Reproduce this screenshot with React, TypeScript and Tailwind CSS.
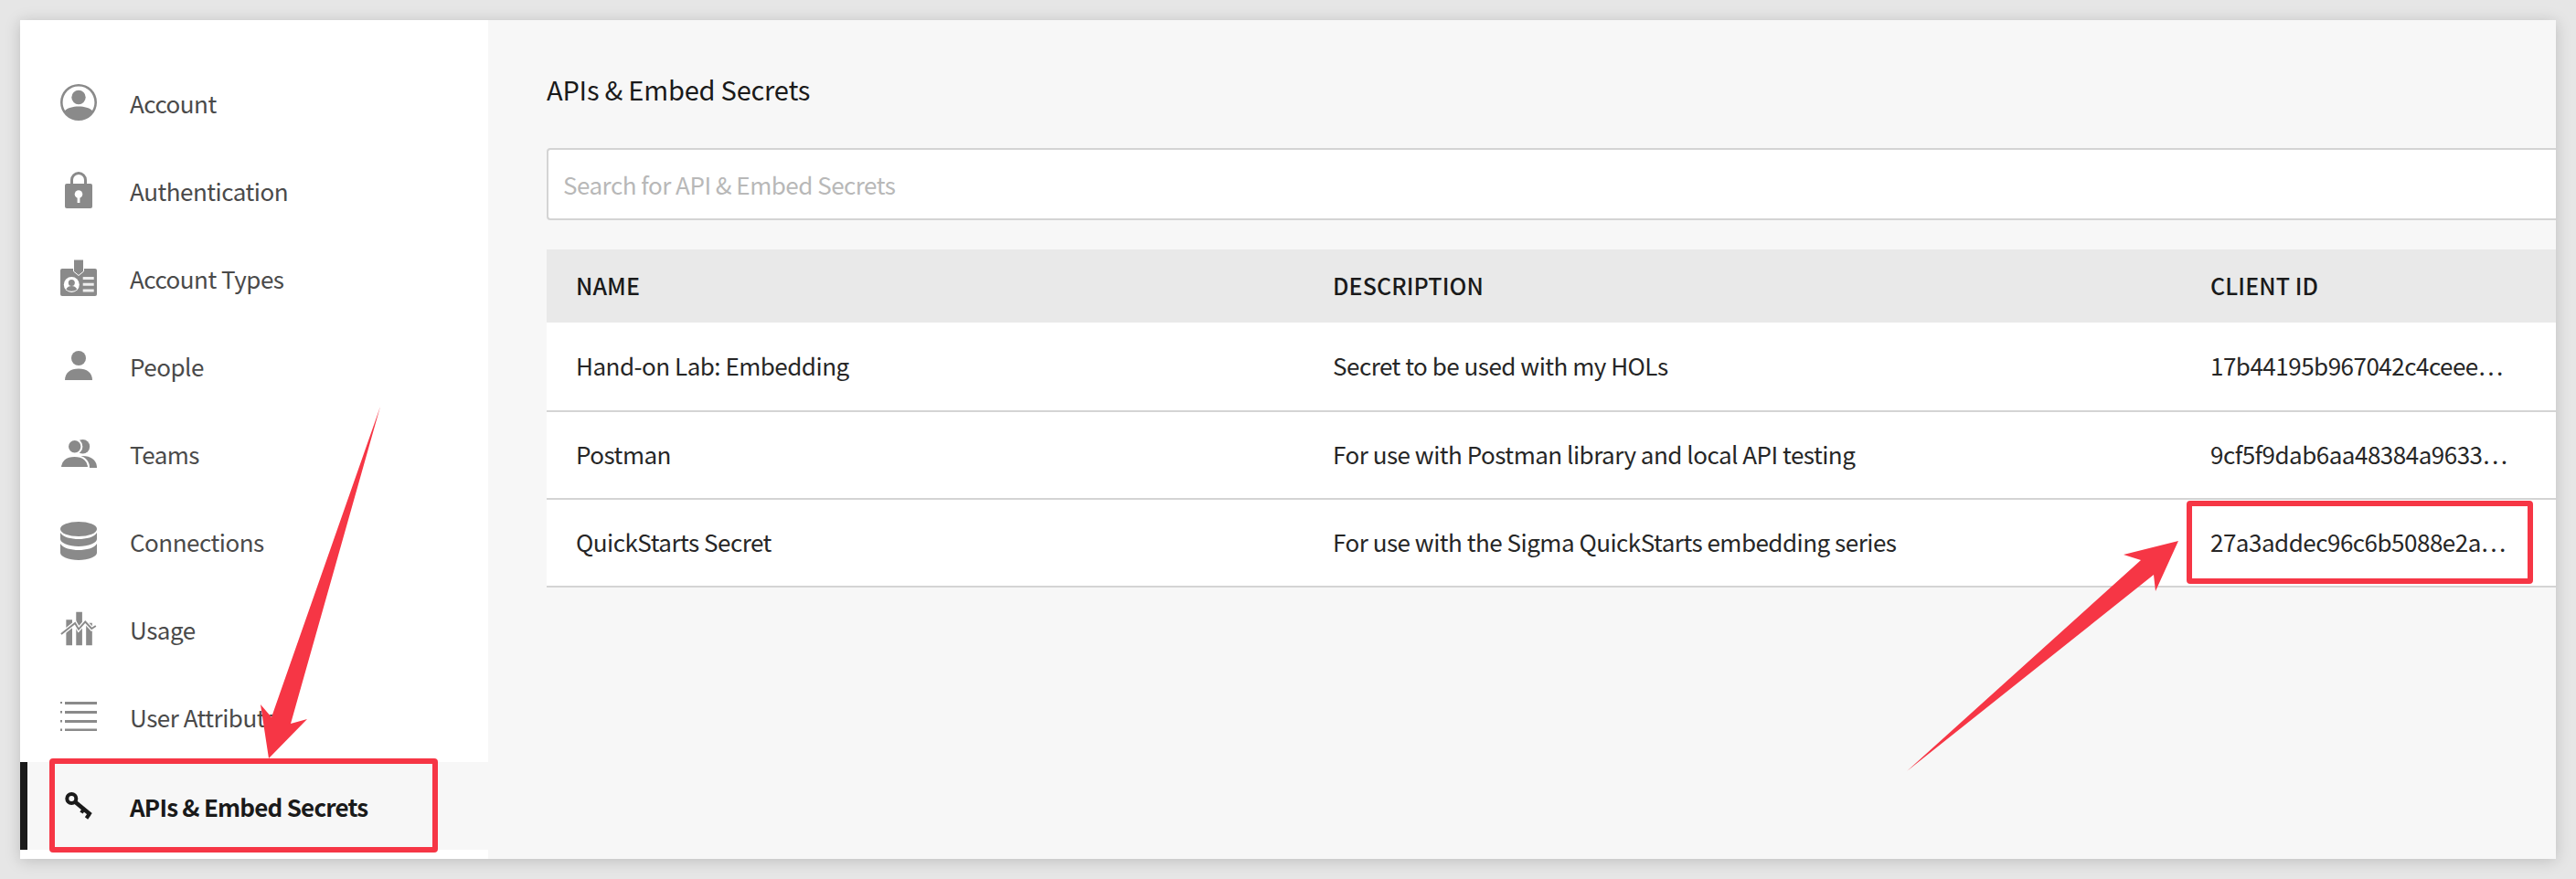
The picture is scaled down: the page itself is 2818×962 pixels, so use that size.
const navItems = [
  { label: "Account", icon: <AccountIcon /> },
  { label: "Authentication", icon: <LockIcon /> },
  { label: "Account Types", icon: <BadgeIcon /> },
  { label: "People", icon: <PersonIcon /> },
  { label: "Teams", icon: <TeamsIcon /> },
  { label: "Connections", icon: <DatabaseIcon /> },
  { label: "Usage", icon: <UsageIcon /> },
  { label: "User Attributes", icon: <ListIcon /> },
];

const rows = [
  {
    name: "Hand-on Lab: Embedding",
    description: "Secret to be used with my HOLs",
    clientId: "17b44195b967042c4ceee…",
  },
  {
    name: "Postman",
    description: "For use with Postman library and local API testing",
    clientId: "9cf5f9dab6aa48384a9633…",
  },
  {
    name: "QuickStarts Secret",
    description: "For use with the Sigma QuickStarts embedding series",
    clientId: "27a3addec96c6b5088e2a…",
  },
];

function AccountIcon() {
  return (
    <svg viewBox="0 0 40 40" className="h-10 w-10 fill-[#8a8a8a]">
      <path d="M20 0a20 20 0 1 0 0 40 20 20 0 0 0 0-40Zm0 2.600c9.600 0 17.400 7.800 17.400 17.400 0 3.300-.9 6.400-2.500 9-3-3-8.500-4.600-14.900-4.600S8.100 26 5.100 29c-1.600-2.600-2.500-5.700-2.500-9C2.600 10.400 10.400 2.600 20 2.600Z" />
      <circle cx="20" cy="14.500" r="7.700" />
    </svg>
  );
}

function LockIcon() {
  return (
    <svg viewBox="0 0 30 40" className="h-10 w-[30px]">
      <path d="M7.500 14V9a7.500 7.500 0 0 1 15 0v5" fill="none" stroke="#8a8a8a" strokeWidth="3" />
      <rect y="13" width="30" height="27" rx="2" fill="#8a8a8a" />
      <circle cx="15" cy="24.500" r="4.300" fill="#fff" />
      <rect x="13.600" y="25" width="2.800" height="9" fill="#fff" />
    </svg>
  );
}

function BadgeIcon() {
  return (
    <svg viewBox="0 0 40 40" className="h-10 w-10">
      <rect y="10" width="40" height="30" rx="2" fill="#8a8a8a" />
      <path d="M14.500 0h11v13l-5.500 4.500-5.500-4.500Z" fill="#8a8a8a" stroke="#fff" strokeWidth="1" />
      <circle cx="12.300" cy="27.500" r="8.500" fill="#fff" />
      <circle cx="12.300" cy="25.500" r="3.500" fill="#8a8a8a" />
      <path d="M6.300 32.500c1.200-2.500 3.500-3.500 6-3.500s4.800 1 6 3.500c-3 3-9 3-12 0Z" fill="#8a8a8a" />
      <path d="M24.700 19h12v3h-12Zm0 6.700h12v3h-12Zm0 6.700h12v3h-12Z" fill="#eee" />
    </svg>
  );
}

function PersonIcon() {
  return (
    <svg viewBox="0 0 30 32" className="h-8 w-[30px] fill-[#8a8a8a]">
      <circle cx="15" cy="8" r="8" />
      <path d="M0 32c0-8 6-12.500 15-12.500S30 24 30 32Z" />
    </svg>
  );
}

function TeamsIcon() {
  return (
    <svg viewBox="0 0 40 31" className="h-[31px] w-10">
      <circle cx="24.500" cy="7.700" r="7.700" fill="#8a8a8a" />
      <path d="M9 31c0-8 6-13 15.500-13S40 23 40 31Z" fill="#8a8a8a" />
      <circle cx="15.700" cy="7.700" r="7.700" fill="#8a8a8a" stroke="#fff" strokeWidth="2" />
      <path d="M0 31c0-8 6-13 15.500-13S31 23 31 31Z" fill="#8a8a8a" stroke="#fff" strokeWidth="2" />
    </svg>
  );
}

function DatabaseIcon() {
  return (
    <svg viewBox="0 0 40 42" className="h-[42px] w-10 fill-[#8a8a8a]">
      <ellipse cx="20" cy="8" rx="20" ry="8" />
      <path d="M0 12c3 5 12 7 20 7s17-2 20-7v7c0 4-9 8-20 8S0 23 0 19Z" />
      <path d="M0 24c3 5 12 7 20 7s17-2 20-7v10c0 4-9 8-20 8S0 38 0 34Z" />
    </svg>
  );
}

function UsageIcon() {
  return (
    <svg viewBox="0 0 44 40" className="h-10 w-11">
      <path d="M7 9.300h7.300V40H7ZM19 0h7.300v40H19Zm12 13h7.300v27H31Z" fill="#8a8a8a" />
      <path d="M1 26.700 17.700 13.300l4.300 7.400 8-9 7.700 8.300 5-3.300" fill="none" stroke="#fff" strokeWidth="5" />
      <path d="M1 26.700 17.700 13.300l4.300 7.400 8-9 7.700 8.300 5-3.300" fill="none" stroke="#8a8a8a" strokeWidth="2.200" />
    </svg>
  );
}

function ListIcon() {
  return (
    <svg viewBox="0 0 40 32" className="h-8 w-10 fill-[#8a8a8a]">
      <path d="M0 0h2v2H0Zm0 10h2v2.500H0Zm0 10h2v2.500H0Zm0 9.500h2V32H0ZM5 0h35v3H5Zm0 10h35v3H5Zm0 10h35v3H5Zm0 9.500h35V32H5Z" />
    </svg>
  );
}

function KeyIcon() {
  return (
    <svg viewBox="0 0 32 32" className="h-8 w-8" fill="none" stroke="#1a1a1a">
      <circle cx="8.300" cy="8" r="5" strokeWidth="4" />
      <path d="M12 11.500 29.300 25.700" strokeWidth="4.500" />
      <path d="m22 19-3 4.500M28 24.500l-3.500 5" strokeWidth="4" />
    </svg>
  );
}

export default function App() {
  return (
    <div className="relative h-[962px] w-[2818px] overflow-hidden bg-[#e6e6e6] p-[22px] font-['Noto_Sans_CJK_SC','Noto_Sans',sans-serif]">
      <div className="flex h-[918px] w-[2774px] shadow-[0_2px_16px_rgba(0,0,0,0.18)]">
        <aside className="flex w-[512px] shrink-0 flex-col bg-white pt-[42px]">
          {navItems.map((item) => (
            <div key={item.label} className="flex h-24 items-center pl-11 text-[26px] tracking-[-0.5px] text-[#4a4a4a]">
              <span className="flex w-10 justify-center">{item.icon}</span>
              <span className="ml-9">{item.label}</span>
            </div>
          ))}
          <div className="mt-0.5 flex h-24 items-center border-l-8 border-[#1a1a1a] bg-[#f7f7f7] pl-9 text-[26px] font-semibold tracking-[-0.8px] text-[#1a1a1a]">
            <span className="flex w-10 justify-center">
              <KeyIcon />
            </span>
            <span className="ml-9">APIs &amp; Embed Secrets</span>
          </div>
        </aside>
        <main className="min-w-0 flex-1 bg-[#f7f7f7] pl-16 pt-[55px]">
          <h1 className="text-[29px] leading-10 tracking-[-0.2px] text-[#1a1a1a]">APIs &amp; Embed Secrets</h1>
          <div className="mt-[45px] flex h-[79px] items-center rounded-l-sm border-2 border-r-0 border-[#d4d4d4] bg-white pl-4 text-[26px] tracking-[-0.5px] text-[#b8b8b8]">
            Search for API &amp; Embed Secrets
          </div>
          <div className="mt-8 grid h-20 grid-cols-[828px_960px_1fr] items-center bg-[#e9e9e9] pl-8 text-[25px] font-medium tracking-[0.1px] text-[#1a1a1a]">
            <span>NAME</span>
            <span>DESCRIPTION</span>
            <span>CLIENT ID</span>
          </div>
          <div>
            {rows.map((row) => (
              <div
                key={row.name}
                className="grid h-24 grid-cols-[828px_960px_1fr] items-center border-b-2 border-[#d4d4d4] bg-white pb-[3px] pl-8 text-[26px] tracking-[-0.5px] text-[#262626] first:h-[98px]"
              >
                <span>{row.name}</span>
                <span>{row.description}</span>
                <span>{row.clientId}</span>
              </div>
            ))}
          </div>
        </main>
      </div>

      {/* annotations drawn on top of the screenshot */}
      <div className="absolute left-[54px] top-[830px] h-[103px] w-[425px] rounded-sm border-[6px] border-[#f63645]" />
      <div className="absolute left-[2392px] top-[548px] h-[91px] w-[379px] rounded-sm border-[6px] border-[#f63645]" />
      <svg className="absolute inset-0 h-[962px] w-[2818px]" viewBox="0 0 2818 962">
        <polygon points="416,445 318,792 336,787 294,830 285,771 297,785" fill="#f63645" />
        <polygon points="2086,844 2342,613 2323,607 2383,592 2358,647 2356,629" fill="#f63645" />
      </svg>
    </div>
  );
}
